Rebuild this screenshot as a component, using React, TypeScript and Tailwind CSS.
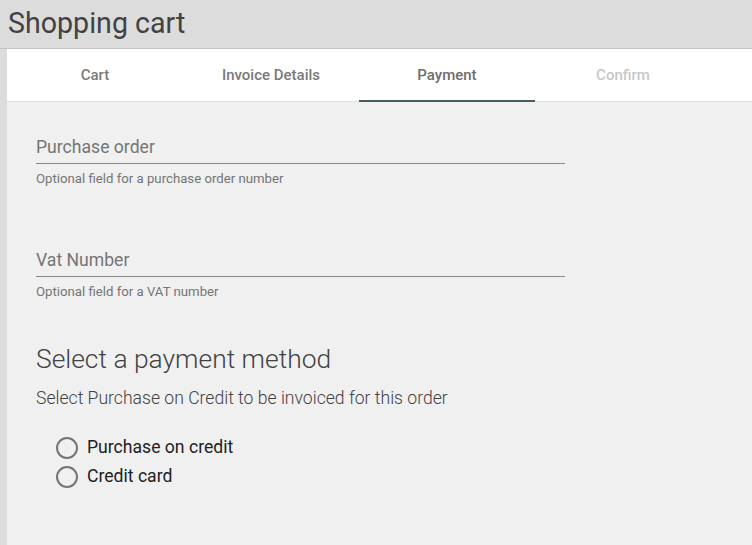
import React from 'react';

const tabs = [
  { label: 'Cart', className: 'text-[#7a7a7a]' },
  { label: 'Invoice Details', className: 'text-[#7a7a7a]' },
  { label: 'Payment', className: 'text-[#6e6e6e]', active: true },
  { label: 'Confirm', className: 'text-[#c8c8c8]' },
];

const Field = ({ label, hint }: { label: string; hint: string }) => (
  <div className="w-[529px]">
    <div className="border-b border-[#8a8a8a] pb-[6px] text-[17.6px] leading-[20px] text-[#757575]">{label}</div>
    <div className="mt-[8px] text-[13.2px] leading-[14px] text-[#757575]">{hint}</div>
  </div>
);

const Radio = ({ label }: { label: string }) => (
  <label className="flex items-center gap-[9px] h-[29px]">
    <span className="w-[22px] h-[22px] rounded-full border-2 border-[#757575]" />
    <span className="text-[17.6px] text-[#212121]">{label}</span>
  </label>
);

export default function App() {
  return (
    <div className="w-[752px] h-[545px] flex flex-col bg-[#dcdcdc] overflow-hidden" style={{ fontFamily: 'Roboto, "Liberation Sans", sans-serif' }}>
      <header className="h-[49px] shrink-0 border-b border-[#c2c2c2] px-[8px] flex items-center">
        <h1 className="text-[28.6px] leading-[32px] text-[#424242] -mt-[3px]">Shopping cart</h1>
      </header>
      <div className="flex-1 ml-[7px] flex flex-col bg-[#f0f0f0]">
        <nav className="h-[53px] shrink-0 bg-white border-b border-[#e0e0e0] flex">
          {tabs.map((t) => (
            <div
              key={t.label}
              className={`w-[176px] pt-[2px] flex items-center justify-center text-[15px] font-medium border-b-2 -mb-[1px] ${t.active ? 'border-[#455a64]' : 'border-transparent'} ${t.className}`}
            >
              {t.label}
            </div>
          ))}
        </nav>
        <main className="px-[29px] pt-[35px]">
          <Field label="Purchase order" hint="Optional field for a purchase order number" />
          <div className="h-[64px]" />
          <Field label="Vat Number" hint="Optional field for a VAT number" />
          <h2 className="mt-[45px] text-[26.4px] leading-[30px] font-light text-[#424242]">Select a payment method</h2>
          <p className="mt-[14px] text-[17.6px] leading-[20px] font-light text-[#424242]">Select Purchase on Credit to be invoiced for this order</p>
          <div className="mt-[25px] pl-[20px] flex flex-col">
            <Radio label="Purchase on credit" />
            <Radio label="Credit card" />
          </div>
        </main>
      </div>
    </div>
  );
}
